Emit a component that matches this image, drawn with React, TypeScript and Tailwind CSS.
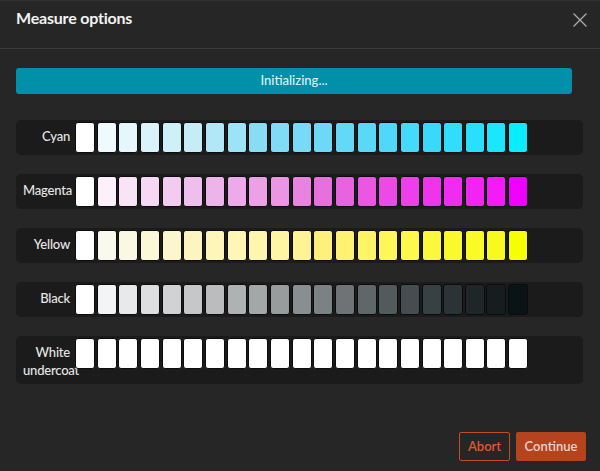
import React from "react";

type Anchor = [number, string];

const rows: { label: string[]; anchors: Anchor[] }[] = [
  {
    label: ["Cyan"],
    anchors: [
      [0, "#ffffff"], [1, "#eefafd"], [5, "#c6ecf7"], [8, "#88ddf5"], [10, "#78daf6"],
      [13, "#5ad8f8"], [16, "#3ad9fc"], [18, "#28dffe"], [20, "#0aecff"],
    ],
  },
  {
    label: ["Magenta"],
    anchors: [
      [0, "#ffffff"], [1, "#fdf0fb"], [5, "#eebeec"], [9, "#eb96e4"], [11, "#e670dc"],
      [14, "#ec4ae7"], [16, "#ee35ec"], [19, "#f31bf7"], [20, "#f000ff"],
    ],
  },
  {
    label: ["Yellow"],
    anchors: [
      [0, "#ffffff"], [1, "#f9f9ee"], [5, "#fcf5c0"], [8, "#fff6ae"], [10, "#fff395"],
      [11, "#ffef7b"], [14, "#fff75a"], [17, "#faf92d"], [19, "#f8fa1e"], [20, "#f8ff00"],
    ],
  },
  {
    label: ["Black"],
    anchors: [
      [0, "#ffffff"], [1, "#f3f4f6"], [5, "#c5c7c8"], [9, "#979c9d"], [14, "#525a5c"],
      [16, "#374043"], [18, "#1f2628"], [20, "#0a1416"],
    ],
  },
  { label: ["White", "undercoat"], anchors: [[0, "#ffffff"], [20, "#ffffff"]] },
];

function hex(h: string) {
  return [1, 3, 5].map((p) => parseInt(h.slice(p, p + 2), 16));
}

function colorAt(anchors: Anchor[], i: number) {
  for (let k = 0; k < anchors.length - 1; k++) {
    const [i0, c0] = anchors[k];
    const [i1, c1] = anchors[k + 1];
    if (i >= i0 && i <= i1) {
      const t = (i - i0) / (i1 - i0);
      const a = hex(c0);
      const b = hex(c1);
      const c = a.map((v, j) => Math.round(v + (b[j] - v) * t));
      return `rgb(${c[0]},${c[1]},${c[2]})`;
    }
  }
  return anchors[anchors.length - 1][1];
}

export default function App() {
  return (
    <div
      className="w-[600px] h-[471px] bg-[#262626] flex flex-col border-t border-[#303030]"
      style={{ fontFamily: 'Lato, "Open Sans", sans-serif' }}
    >
      <div className="h-[48px] shrink-0 flex items-start justify-between pl-4 pr-[13px] pt-[5px] border-b border-[#3a3a3a]">
        <div className="text-[16px] leading-[24px] font-bold tracking-[-0.2px] text-[#f2f2f2]">Measure options</div>
        <svg width="14" height="14" viewBox="0 0 14 14" className="mt-[7px]">
          <path d="M1 1L13 13M13 1L1 13" stroke="#a8a8a8" strokeWidth="1.4" strokeLinecap="round" />
        </svg>
      </div>
      <div className="flex flex-col pl-4 pt-[19px]">
        <div className="w-[556px] h-[26px] rounded-[3px] bg-[#0091a8] flex items-center justify-center text-[13px] font-medium text-[#dff0f3]">
          Initializing...
        </div>
        <div className="mt-[26px] flex flex-col gap-[19px]">
          {rows.map((r) => (
            <div key={r.label.join(" ")} className="w-[567px] flex items-start rounded-[5px] bg-[#1b1b1b]">
              <div className="w-[59px] shrink-0 pl-[7px] pr-[5px] pt-[7px] pb-[5px]">
                <div className="text-right text-[13px] leading-[18px] font-medium tracking-[-0.2px] text-[#e6e6e6] whitespace-nowrap">
                  {r.label.map((l) => (
                    <div key={l}>{l}</div>
                  ))}
                </div>
              </div>
              <div className="flex gap-[1.67px] pt-[2px] pb-[2px]">
                {Array.from({ length: 21 }).map((_, i) => (
                  <div
                    key={i}
                    className="w-[20px] h-[31px] rounded-[3px] border border-[#0c0c0c]"
                    style={{ backgroundColor: colorAt(r.anchors, i) }}
                  />
                ))}
              </div>
            </div>
          ))}
        </div>
      </div>
      <div className="mt-auto flex justify-end gap-[6px] pr-[14px] pb-[10px]">
        <button className="w-[51px] h-[29px] rounded-[2px] border-[1.5px] border-[#c44a20] text-[#e2572b] text-[13px] font-semibold">
          Abort
        </button>
        <button className="w-[70px] h-[29px] rounded-[2px] bg-[#b5431d] text-[#e3d3cb] text-[13px] font-semibold">
          Continue
        </button>
      </div>
    </div>
  );
}
